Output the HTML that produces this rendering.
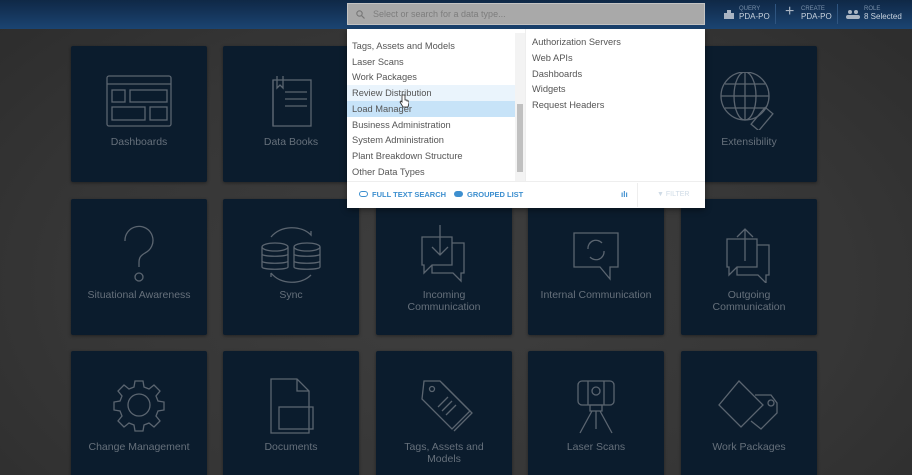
<!DOCTYPE html>
<html><head><meta charset="utf-8"><style>
*{margin:0;padding:0;box-sizing:border-box}
html{width:912px;height:475px;overflow:hidden}
body{width:912px;height:475px;overflow:hidden;font-family:"Liberation Sans",sans-serif;background:radial-gradient(ellipse at 50% 60%,#3e3e3e 0%,#363636 60%,#2c2c2c 100%);position:relative}
.hdr{position:absolute;left:0;top:0;width:912px;height:29px;background:linear-gradient(#0f2846,#1b4472)}
.tile{position:absolute;width:136px;height:136px;background:#0b1c2d;border-radius:2px;color:#66707b;font-size:10.5px;text-align:center;box-shadow:0 1px 3px rgba(0,0,0,.4)}
.tile svg{position:absolute;left:34px;top:26px;width:68px;height:58px;fill:none;stroke:#5b6570;stroke-width:1.3}
.tile .t{position:absolute;left:0;right:0;top:90px;line-height:12px}
.srch{position:absolute;left:347px;top:3px;width:358px;height:22px;background:#a9a9a9;border:1px solid #c4c4c4;font-size:9px;color:#7d7d7d;padding:5px 0 0 25px}
.dd{position:absolute;left:347px;top:29px;width:358px;height:179px;background:#fff;box-shadow:0 2px 6px rgba(0,0,0,.4);font-size:9.3px;color:#555}
.li{position:absolute;left:0;width:168px;height:16px;padding:3px 0 0 5px}
.ri{position:absolute;left:185px;padding-top:3px}
.hd{position:absolute;top:0;font-size:6px;color:#7a90aa}
.hv{position:absolute;top:12px;font-size:8px;color:#c9d3de}
</style></head><body>
<div class="hdr">
<svg style="position:absolute;left:723px;top:9px" width="12" height="11"><rect x="1" y="4" width="10" height="6" fill="#aab5c3"/><rect x="4" y="1" width="4" height="4" fill="#aab5c3"/></svg>
<div class="hd" style="left:739px;top:6px">QUERY</div><div class="hv" style="left:739px">PDA-PO</div>
<div style="position:absolute;left:775px;top:4px;width:1px;height:20px;background:#2f5580"></div>
<div style="position:absolute;left:785px;top:3px;color:#aab5c3;font-size:16px">+</div>
<div class="hd" style="left:801px;top:6px">CREATE</div><div class="hv" style="left:801px">PDA-PO</div>
<div style="position:absolute;left:837px;top:4px;width:1px;height:20px;background:#2f5580"></div>
<svg style="position:absolute;left:846px;top:9px" width="14" height="10"><circle cx="4" cy="3" r="2" fill="#aab5c3"/><circle cx="10" cy="3" r="2" fill="#aab5c3"/><rect x="0" y="6" width="14" height="4" rx="2" fill="#aab5c3"/></svg>
<div class="hd" style="left:864px;top:6px">ROLE</div><div class="hv" style="left:864px">8 Selected</div>
</div>
<div class="srch"><svg style="position:absolute;left:8px;top:6px" width="9" height="9"><circle cx="3.5" cy="3.5" r="2.7" fill="none" stroke="#777" stroke-width="1.1"/><line x1="5.5" y1="5.5" x2="8.5" y2="8.5" stroke="#777" stroke-width="1.2"/></svg>Select or search for a data type...</div>

<div class="tile" style="left:71px;top:46px"><svg viewBox="0 0 68 58"><rect x="2" y="4" width="64" height="50" rx="2"/><line x1="2" y1="12" x2="66" y2="12"/><rect x="7" y="18" width="13" height="12"/><rect x="25" y="18" width="37" height="12"/><rect x="7" y="35" width="33" height="13"/><rect x="45" y="35" width="17" height="13"/></svg><div class="t" style="top:90px">Dashboards</div></div>
<div class="tile" style="left:223px;top:46px"><svg viewBox="0 0 68 58"><rect x="16" y="8" width="38" height="46"/><path d="M16 8v46M20 4v12l3-3 3 3V4"/><line x1="28" y1="20" x2="50" y2="20"/><line x1="28" y1="27" x2="50" y2="27"/><line x1="28" y1="34" x2="50" y2="34"/></svg><div class="t" style="top:90px">Data Books</div></div>
<div class="tile" style="left:681px;top:46px"><svg viewBox="0 0 68 58"><circle cx="30" cy="24" r="24"/><ellipse cx="30" cy="24" rx="11" ry="24"/><line x1="6" y1="24" x2="54" y2="24"/><line x1="30" y1="0" x2="30" y2="48"/><path d="M10 12h40M10 36h40"/><rect x="42" y="36" width="10" height="22" transform="rotate(40 47 47)"/></svg><div class="t" style="top:90px">Extensibility</div></div>

<div class="tile" style="left:71px;top:199px"><svg viewBox="0 0 68 58"><path d="M20 16a14 14 0 1 1 20 12c-5 3-6 5-6 10v4"/><circle cx="34" cy="52" r="4"/></svg><div class="t" style="top:90px">Situational Awareness</div></div>
<div class="tile" style="left:223px;top:199px"><svg viewBox="0 0 68 58"><ellipse cx="18" cy="22" rx="13" ry="4"/><path d="M5 22v20c0 3 26 3 26 0V22M5 29c0 3 26 3 26 0M5 36c0 3 26 3 26 0"/><ellipse cx="50" cy="22" rx="13" ry="4"/><path d="M37 22v20c0 3 26 3 26 0V22M37 29c0 3 26 3 26 0M37 36c0 3 26 3 26 0"/><path d="M14 12c10-12 30-12 40-2l0-4M14 48c10 12 30 12 40 2M14 48l0 4"/></svg><div class="t" style="top:90px">Sync</div></div>
<div class="tile" style="left:376px;top:199px"><svg viewBox="0 0 68 58"><path d="M12 12h30v28H22l-8 8v-8h-2z"/><path d="M42 18h12v30h-3v8l-8-8H22v-8"/><path d="M30 0v30M22 22l8 8 8-8"/></svg><div class="t">Incoming<br>Communication</div></div>
<div class="tile" style="left:528px;top:199px"><svg viewBox="0 0 68 58"><path d="M12 8h44v34h-8v12l-10-12H12z"/><path d="M26 24a8 8 0 0 1 14-6M42 26a8 8 0 0 1-14 6"/></svg><div class="t">Internal Communication</div></div>
<div class="tile" style="left:681px;top:199px"><svg viewBox="0 0 68 58"><path d="M12 14h30v28H22l-8 8v-8h-2z"/><path d="M42 20h12v30h-3v8l-8-8H22v-8"/><path d="M30 36V4M22 12l8-8 8 8"/></svg><div class="t">Outgoing<br>Communication</div></div>

<div class="tile" style="left:71px;top:351px"><svg viewBox="0 0 68 58"><circle cx="34" cy="28" r="11"/><path d="M30 4h8l1 6 5 2 5-4 6 6-4 5 2 5 6 1v8l-6 1-2 5 4 5-6 6-5-4-5 2-1 6h-8l-1-6-5-2-5 4-6-6 4-5-2-5-6-1v-8l6-1 2-5-4-5 6-6 5 4 5-2z"/></svg><div class="t">Change Management</div></div>
<div class="tile" style="left:223px;top:351px"><svg viewBox="0 0 68 58"><path d="M14 2h26l12 12v42H14z"/><path d="M40 2v12h12"/><rect x="22" y="30" width="34" height="22"/></svg><div class="t">Documents</div></div>
<div class="tile" style="left:376px;top:351px"><svg viewBox="0 0 68 58"><path d="M14 4h16l30 30-18 18L12 22z"/><path d="M32 6l30 30-18 18"/><circle cx="22" cy="12" r="2.5"/><path d="M28 30l10-10M32 34l10-10M36 38l10-10"/></svg><div class="t">Tags, Assets and<br>Models</div></div>
<div class="tile" style="left:528px;top:351px"><svg viewBox="0 0 68 58"><rect x="16" y="4" width="36" height="24" rx="4"/><path d="M26 4v24M42 4v24"/><circle cx="34" cy="14" r="4"/><path d="M28 28h12v6H28zM30 34L18 56M38 34l12 22M34 34v18"/></svg><div class="t">Laser Scans</div></div>
<div class="tile" style="left:681px;top:351px"><svg viewBox="0 0 68 58"><path d="M24 4l24 24-22 22L4 28z"/><path d="M40 18h16l6 8v10L46 52l-10-8"/><circle cx="56" cy="26" r="3"/></svg><div class="t">Work Packages</div></div>

<div class="dd">
<div class="li" style="top:9px">Tags, Assets and Models</div>
<div class="li" style="top:25px">Laser Scans</div>
<div class="li" style="top:40px">Work Packages</div>
<div class="li" style="top:56px;background:#eaf4fc">Review Distribution</div>
<div class="li" style="top:72px;background:#c7e3f8">Load Manager</div>
<div class="li" style="top:88px">Business Administration</div>
<div class="li" style="top:103px">System Administration</div>
<div class="li" style="top:119px">Plant Breakdown Structure</div>
<div class="li" style="top:135px">Other Data Types</div>
<div style="position:absolute;left:168px;top:4px;width:10px;height:148px;background:#f3f3f3"></div>
<div style="position:absolute;left:170px;top:75px;width:6px;height:68px;background:#c0c0c0"></div>
<div style="position:absolute;left:178px;top:0;width:1px;height:152px;background:#eee"></div>
<div class="ri" style="top:5px">Authorization Servers</div>
<div class="ri" style="top:21px">Web APIs</div>
<div class="ri" style="top:37px">Dashboards</div>
<div class="ri" style="top:52px">Widgets</div>
<div class="ri" style="top:68px">Request Headers</div>
<div style="position:absolute;left:0;top:152px;width:358px;height:1px;background:#eee"></div>
<div style="position:absolute;left:12px;top:161px;font-size:7.5px;font-weight:bold;color:#3d8fcf"><span style="display:inline-block;width:9px;height:6px;border:1px solid #3d8fcf;border-radius:3px;margin-right:4px"></span>FULL TEXT SEARCH</div>
<div style="position:absolute;left:107px;top:161px;font-size:7.5px;font-weight:bold;color:#3d8fcf"><span style="display:inline-block;width:9px;height:6px;background:#3d8fcf;border-radius:3px;margin-right:4px"></span>GROUPED LIST</div>
<div style="position:absolute;left:274px;top:161px;font-size:8px;color:#3d8fcf;font-weight:bold">ılı</div>
<div style="position:absolute;left:290px;top:154px;width:1px;height:24px;background:#eee"></div>
<div style="position:absolute;left:310px;top:162px;font-size:7px;color:#cfdbe6">▼ FILTER</div>
</div>
<svg style="position:absolute;left:399px;top:94px" width="10" height="14"><path d="M3 1v7l-1-1-1 1 3 5h5l1-4V7l-2 0V6H6V1z" fill="#fff" stroke="#222" stroke-width=".8"/></svg>
</body></html>
